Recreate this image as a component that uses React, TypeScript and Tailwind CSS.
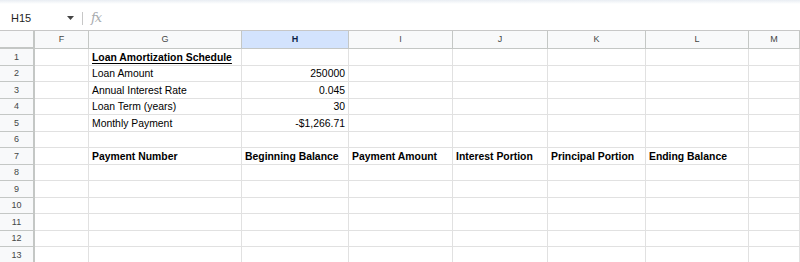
import React from 'react'

const cols = ['F', 'G', 'H', 'I', 'J', 'K', 'L', 'M']

type Cell = { text: string; bold?: boolean; underline?: boolean; right?: boolean }

// keyed by column letter
const rows: Record<string, Cell>[] = [
  { G: { text: 'Loan Amortization Schedule', bold: true, underline: true } },
  { G: { text: 'Loan Amount' }, H: { text: '250000', right: true } },
  { G: { text: 'Annual Interest Rate' }, H: { text: '0.045', right: true } },
  { G: { text: 'Loan Term (years)' }, H: { text: '30', right: true } },
  { G: { text: 'Monthly Payment' }, H: { text: '-$1,266.71', right: true } },
  {},
  {
    G: { text: 'Payment Number', bold: true },
    H: { text: 'Beginning Balance', bold: true },
    I: { text: 'Payment Amount', bold: true },
    J: { text: 'Interest Portion', bold: true },
    K: { text: 'Principal Portion', bold: true },
    L: { text: 'Ending Balance', bold: true },
  },
  {},
  {},
  {},
  {},
  {},
  {},
]

export default function App() {
  return (
    <div className="w-[800px] h-[262px] overflow-hidden bg-white font-['Liberation_Sans',Arial,sans-serif] text-black">
      <div className="h-[4px] bg-gradient-to-b from-[#e9edf3] to-white" />

      {/* Formula bar */}
      <div className="h-[26px] flex items-center">
        <div className="w-[80px] flex items-center justify-between pl-[11px] pr-[6px] pt-[2px]">
          <span className="text-[11px] text-[#1f1f1f]">H15</span>
          <svg width="7" height="4" viewBox="0 0 7 4">
            <path d="M0 0h7L3.5 4z" fill="#444" />
          </svg>
        </div>
        <div className="w-px h-[13px] bg-[#c7c7c7] ml-[2px] mt-[2px]" />
        <span className="ml-[8px] mt-[2px] text-[13px] italic text-[#a8abaf] font-['DejaVu_Serif',serif] tracking-[-1px]">fx</span>
      </div>

      {/* Grid */}
      <div className="grid grid-cols-[35px_54px_153px_107px_104px_95px_98px_103px_51px] border-t border-[#c7c7c7]">
        <div className="h-[18px] bg-[#f8f9fa] border-r-[2px] border-b-[2px] border-[#c4c7c5]" />
        {cols.map((c) => (
          <div
            key={c}
            className={
              c === 'H'
                ? 'h-[18px] flex items-center justify-center bg-[#d3e3fd] border-r border-b border-[#c4c7c5] text-[9px] font-bold text-[#0b1f4a]'
                : 'h-[18px] flex items-center justify-center bg-[#f8f9fa] border-r border-b border-[#c4c7c5] text-[9px] text-[#444746]'
            }
          >
            {c}
          </div>
        ))}

        {rows.map((row, i) => (
          <React.Fragment key={i}>
            <div className="h-[16.5px] flex items-center justify-center pt-[1px] bg-[#f8f9fa] border-r-[2px] border-b border-[#c4c7c5] text-[9px] text-[#444746]">
              {i + 1}
            </div>
            {cols.map((c) => {
              const cell = row[c]
              return (
                <div
                  key={c}
                  className={
                    'h-[16.5px] flex items-center px-[3px] pt-[2px] border-r border-b border-[#e1e1e1] text-[10.4px] whitespace-nowrap overflow-visible ' +
                    (cell?.right ? 'justify-end ' : '') +
                    (cell?.bold ? 'font-bold ' : '') +
                    (cell?.underline ? 'underline underline-offset-[2px]' : '')
                  }
                >
                  {cell?.text}
                </div>
              )
            })}
          </React.Fragment>
        ))}
      </div>
    </div>
  )
}
